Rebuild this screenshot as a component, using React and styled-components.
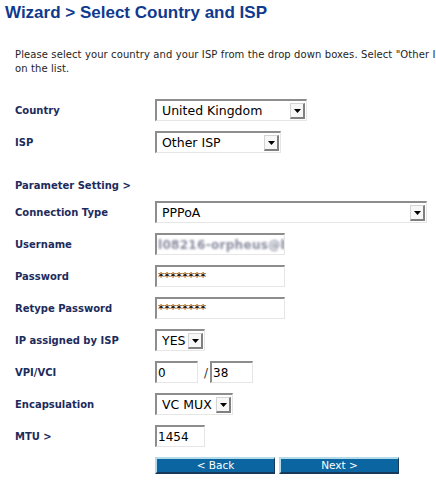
import React from "react";
import styled, { createGlobalStyle } from "styled-components";

const Global = createGlobalStyle`
  html, body { margin: 0; padding: 0; background: #fff; overflow: hidden; }
  body { font-family: "DejaVu Sans", Verdana, sans-serif; }
`;

const Page = styled.div`
  width: 436px;
  height: 483px;
  overflow: hidden;
  padding: 3px 0 0 5px;
  box-sizing: border-box;
`;

const Title = styled.h1`
  margin: 0;
  font-family: "Liberation Sans", Arial, sans-serif;
  font-weight: bold;
  font-size: 17px;
  line-height: 20px;
  color: #0f3a8e;
  white-space: nowrap;
`;

const Intro = styled.p`
  margin: 25px 0 0 10px;
  font-size: 10px;
  line-height: 14px;
  letter-spacing: 0.1px;
  color: #1e1e1e;
  white-space: nowrap;
`;

const Form = styled.div`
  margin: 18px 0 0 10px;
  display: flex;
  flex-direction: column;
`;

const Row = styled.div`
  display: flex;
  align-items: center;
  height: 32px;
`;

const ButtonRow = styled.div`
  display: flex;
  align-items: flex-start;
  padding-top: 5px;
`;

const SectionHead = styled.div`
  margin-top: 16px;
  height: 22px;
  display: flex;
  align-items: center;
  font-size: 10px;
  font-weight: bold;
  color: #1d2b5c;
`;

const Label = styled.div`
  width: 140px;
  flex: none;
  font-size: 10px;
  font-weight: bold;
  color: #1d2b5c;
  white-space: nowrap;
`;

const Control = styled.div`
  display: flex;
  align-items: center;
`;

const SelectBox = styled.div`
  box-sizing: border-box;
  width: ${(p) => p.$w}px;
  height: 22px;
  border-style: solid;
  border-width: 2px 1px 1px 2px;
  border-color: #8d8d8d #e6e6e6 #e6e6e6 #8d8d8d;
  background: #fff;
  display: flex;
  align-items: center;
  padding-left: 5px;
  font-size: 12.5px;
  color: #000;
  white-space: nowrap;
`;

const SelectText = styled.span`
  flex: 1;
  overflow: hidden;
`;

const ArrowBox = styled.span`
  box-sizing: border-box;
  width: 15px;
  height: 16px;
  margin-right: 1px;
  margin-top: 1px;
  border-style: solid;
  border-width: 1px 2px 2px 1px;
  border-color: #d4d4d4 #808080 #808080 #d4d4d4;
  background: #f7f7f7;
  display: flex;
  align-items: center;
  justify-content: center;
`;

const Input = styled.div`
  box-sizing: border-box;
  width: ${(p) => p.$w}px;
  height: 22px;
  border-style: solid;
  border-width: 2px 1px 1px 2px;
  border-color: #8d8d8d #e6e6e6 #e6e6e6 #8d8d8d;
  background: #fff;
  display: flex;
  align-items: center;
  padding-left: 1px;
  font-size: 12px;
  color: #000;
  white-space: nowrap;
  overflow: hidden;
`;

const Blurred = styled.span`
  color: #8a8da0;
  filter: blur(1px);
  font-weight: bold;
  letter-spacing: 0.3px;
`;

const Slash = styled.span`
  font-size: 12px;
  color: #333;
  margin: 2px 2px 0 6px;
`;

const Buttons = styled.div`
  display: flex;
  gap: 4px;
`;

const Button = styled.button`
  box-sizing: border-box;
  width: 120px;
  height: 17px;
  padding: 0;
  margin: 0;
  border-style: solid;
  border-width: 2px 1px 2px 2px;
  border-color: #b3dbe9 #17395a #17395a #b3dbe9;
  background: #0b65a0;
  color: #fff;
  font-family: "DejaVu Sans", Verdana, sans-serif;
  font-size: 10.5px;
  line-height: 13px;
  cursor: pointer;
`;

const Arrow = () => (
  <svg width="7" height="4" viewBox="0 0 7 4">
    <polygon points="0,0 7,0 3.5,4" fill="#000" />
  </svg>
);

const Select = ({ w, value }) => (
  <SelectBox $w={w}>
    <SelectText>{value}</SelectText>
    <ArrowBox>
      <Arrow />
    </ArrowBox>
  </SelectBox>
);

const Field = ({ label, children }) => (
  <Row>
    <Label>{label}</Label>
    <Control>{children}</Control>
  </Row>
);

export default function App() {
  return (
    <>
      <Global />
      <Page>
        <Title>Wizard &gt; Select Country and ISP</Title>
        <Intro>
          Please select your country and your ISP from the drop down boxes. Select "Other ISP" if your ISP is not
          <br />
          on the list.
        </Intro>
        <Form>
          <Field label="Country">
            <Select w={152} value="United Kingdom" />
          </Field>
          <Field label="ISP">
            <Select w={126} value="Other ISP" />
          </Field>
          <SectionHead>Parameter Setting &gt;</SectionHead>
          <Field label="Connection Type">
            <Select w={272} value="PPPoA" />
          </Field>
          <Field label="Username">
            <Input $w={130}>
              <Blurred>l08216-orpheus@bt</Blurred>
            </Input>
          </Field>
          <Field label="Password">
            <Input $w={130}>********</Input>
          </Field>
          <Field label="Retype Password">
            <Input $w={130}>********</Input>
          </Field>
          <Field label="IP assigned by ISP">
            <Select w={50} value="YES" />
          </Field>
          <Field label="VPI/VCI">
            <Input $w={43}>0</Input>
            <Slash>/</Slash>
            <Input $w={43}>38</Input>
          </Field>
          <Field label="Encapsulation">
            <Select w={78} value="VC MUX" />
          </Field>
          <Field label="MTU >">
            <Input $w={50}>1454</Input>
          </Field>
          <ButtonRow>
            <Label />
            <Buttons>
              <Button>&lt; Back</Button>
              <Button>Next &gt;</Button>
            </Buttons>
          </ButtonRow>
        </Form>
      </Page>
    </>
  );
}
